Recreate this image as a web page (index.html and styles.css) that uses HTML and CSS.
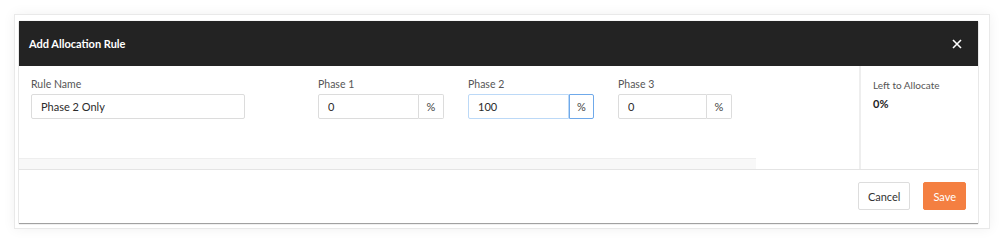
FILE: index.html
```html
<!DOCTYPE html>
<html lang="en">
<head>
    <meta charset="UTF-8">
    <title>Add Allocation Rule</title>
    <link rel="stylesheet" href="styles.css">
</head>
<body>
    <div class="frame">
        <div class="modal">
            <!-- Header -->
            <div class="modal-header">
                <span class="modal-title">Add Allocation Rule</span>
                <svg class="close" width="10" height="10" viewBox="0 0 10 10">
                    <path d="M1 1 L9 9 M9 1 L1 9" stroke="#fff" stroke-width="1.6" fill="none"/>
                </svg>
            </div>

            <!-- Body -->
            <div class="modal-body">
                <div class="main">
                    <div class="fields">
                        <div class="field">
                            <label>Rule Name</label>
                            <input type="text" class="text-input rule-name" value="Phase 2 Only">
                        </div>
                        <div class="field">
                            <label>Phase 1</label>
                            <div class="input-group">
                                <input type="text" class="text-input" value="0">
                                <span class="addon">%</span>
                            </div>
                        </div>
                        <div class="field">
                            <label>Phase 2</label>
                            <div class="input-group focused">
                                <input type="text" class="text-input" value="100">
                                <span class="addon">%</span>
                            </div>
                        </div>
                        <div class="field">
                            <label>Phase 3</label>
                            <div class="input-group narrow">
                                <input type="text" class="text-input" value="0">
                                <span class="addon">%</span>
                            </div>
                        </div>
                    </div>
                    <div class="scroll-strip"></div>
                </div>
                <div class="summary">
                    <label>Left to Allocate</label>
                    <div class="summary-value">0%</div>
                </div>
            </div>

            <!-- Footer -->
            <div class="modal-footer">
                <button class="btn">Cancel</button>
                <button class="btn btn-primary">Save</button>
            </div>
        </div>
    </div>
</body>
</html>
```

FILE: styles.css
```css
/* Modal dialog styling */
body {
    margin: 0;
    padding: 14px;
    background-color: #fff;
    font-family: Lato, "Open Sans", sans-serif;
    color: #333;
}

.frame {
    width: 963px;
    height: 203px;
    padding: 6px 7px 4px 4px;
    border: 1px solid #e9e9e9;
    box-shadow: 0 0 12px rgba(0,0,0,0.06);
}

.modal {
    width: 959px;
    height: 202px;
    background-color: #fff;
    box-shadow: 0 1px 1px rgba(0,0,0,0.35), 0 0 1px rgba(0,0,0,0.2);
    display: flex;
    flex-direction: column;
}

.modal-header {
    height: 45px;
    background-color: #232323;
    display: flex;
    align-items: center;
    justify-content: space-between;
    padding: 0 16px 0 10px;
    color: #fff;
}

.modal-title {
    font-size: 11px;
    font-weight: bold;
}

.modal-body {
    display: flex;
    height: 103px;
}

.main {
    flex: 1;
    display: flex;
    flex-direction: column;
    justify-content: space-between;
}

.fields {
    display: grid;
    grid-template-columns: 287px 150px 150px 150px;
    padding: 12px 0 0 12px;
}

label {
    display: block;
    font-size: 10.5px;
    color: #555;
    margin-bottom: 4px;
}

.text-input {
    box-sizing: border-box;
    height: 25px;
    border: 1px solid #dcdcdc;
    border-radius: 2px;
    padding: 0 9px;
    font-family: inherit;
    font-size: 11px;
    color: #2b2b2b;
    outline: none;
}

.rule-name {
    width: 214px;
}

.input-group {
    display: flex;
    width: 126px;
}

.input-group .text-input {
    width: 101px;
    border-radius: 2px 0 0 2px;
}

.input-group.narrow .text-input {
    width: 89px;
}

.addon {
    box-sizing: border-box;
    width: 25px;
    height: 25px;
    border: 1px solid #dcdcdc;
    border-left: none;
    border-radius: 0 2px 2px 0;
    display: flex;
    align-items: center;
    justify-content: center;
    font-size: 11px;
    color: #444;
}

.input-group.focused .text-input {
    border-color: #bcd9f7;
}

.input-group.focused .addon {
    border: 1px solid #6fa9ea;
}

.scroll-strip {
    width: 737px;
    height: 10px;
    background-color: #f8f8f8;
    border-top: 1px solid #eee;
}

.summary {
    width: 105px;
    border-left: 2px solid #eee;
    padding: 13px 0 0 12px;
}

.summary label {
    font-size: 10px;
    margin-bottom: 6px;
}

.summary-value {
    font-size: 11px;
    font-weight: bold;
    color: #222;
}

.modal-footer {
    flex: 1;
    border-top: 1px solid #e4e4e4;
    display: flex;
    justify-content: flex-end;
    align-items: center;
    gap: 13px;
    padding: 0 12px 1px 0;
}

.btn {
    height: 28px;
    padding: 0 9px;
    border: 1px solid #ddd;
    border-radius: 2px;
    background-color: #fff;
    font-family: inherit;
    font-size: 11px;
    color: #333;
}

.btn-primary {
    background-color: #f47f41;
    border-color: #f47f41;
    color: #fff;
}
```
